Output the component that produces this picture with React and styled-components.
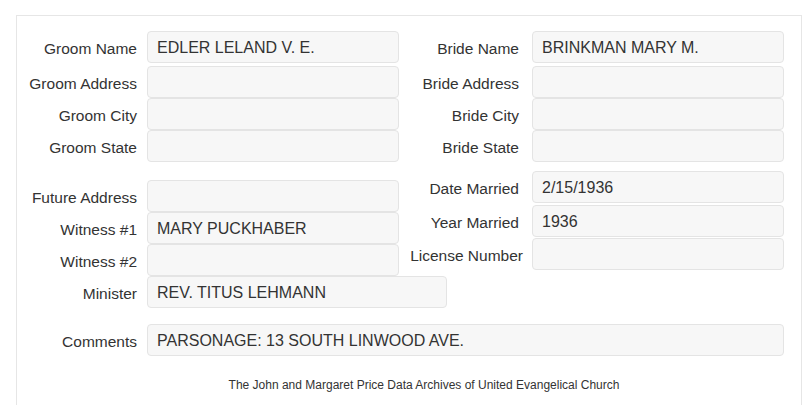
import React from 'react'
import styled, { createGlobalStyle } from 'styled-components'

const GlobalStyle = createGlobalStyle`
  body {
    margin: 0;
    background: #ffffff;
    font-family: "Liberation Sans", Arial, sans-serif;
    color: #333333;
  }
`

const Panel = styled.div`
  box-sizing: border-box;
  width: 786px;
  margin: 15px 0 0 16px;
  border: 1px solid #e6e6e6;
  border-bottom: none;
  padding: 15px 17px 40px 0;
`

const Section = styled.div`
  display: flex;
  align-items: flex-start;
  margin-top: ${props => props.top || 0}px;
`

const Column = styled.div`
  display: flex;
  flex-direction: column;
  flex: none;
  width: ${props => props.width ? props.width + 'px' : 'auto'};
  padding-top: ${props => props.top || 0}px;
`

const Field = styled.div`
  display: grid;
  grid-template-columns: 120px ${props => props.width || 252}px;
  column-gap: ${props => props.gap || 10}px;
  align-items: center;
  margin-top: ${props => props.top || 0}px;
`

const Label = styled.label`
  font-size: 15.5px;
  text-align: right;
  white-space: nowrap;
  padding-top: 3px;
  margin-right: ${props => props.overhang ? -props.overhang : 0}px;
  color: #333333;
`

const Input = styled.input`
  box-sizing: border-box;
  width: 100%;
  height: 32px;
  margin: 0;
  padding: 1px 9px 0;
  border: 1px solid #e4e4e4;
  border-radius: 4px;
  background: #f7f7f7;
  font-family: "Liberation Sans", Arial, sans-serif;
  font-size: 16px;
  color: #333333;
  outline: none;
`

const Footer = styled.div`
  margin-top: 22px;
  padding-left: 47px;
  text-align: center;
  font-size: 12px;
  line-height: 14px;
  color: #333333;
`

const Row = ({ label, value = '', overhang, ...rest }) => (
	<Field { ...rest }>
		<Label overhang={ overhang }>{ label }</Label>
		<Input readOnly value={ value } />
	</Field>
)

export default function App() {
	return (
		<>
			<GlobalStyle />
			<Panel>
				<Section>
					<Column width={ 382 }>
						<Row label="Groom Name" value="EDLER LELAND V. E." />
						<Row label="Groom Address" top={ 3 } />
						<Row label="Groom City" />
						<Row label="Groom State" />
					</Column>
					<Column>
						<Row label="Bride Name" value="BRINKMAN MARY M." gap={ 13 } />
						<Row label="Bride Address" gap={ 13 } top={ 3 } />
						<Row label="Bride City" gap={ 13 } />
						<Row label="Bride State" gap={ 13 } />
					</Column>
				</Section>

				<Section top={ 9 }>
					<Column width={ 382 } top={ 9 }>
						<Row label="Future Address" />
						<Row label="Witness #1" value="MARY PUCKHABER" />
						<Row label="Witness #2" />
						<Row label="Minister" value="REV. TITUS LEHMANN" width={ 300 } />
					</Column>
					<Column>
						<Row label="Date Married" value="2/15/1936" gap={ 13 } />
						<Row label="Year Married" value="1936" gap={ 13 } top={ 2 } />
						<Row label="License Number" gap={ 13 } top={ 1 } overhang={ 4 } />
					</Column>
				</Section>

				<Section top={ 16 }>
					<Row label="Comments" value="PARSONAGE: 13 SOUTH LINWOOD AVE." width={ 637 } />
				</Section>

				<Footer>The John and Margaret Price Data Archives of United Evangelical Church</Footer>
			</Panel>
		</>
	)
}
